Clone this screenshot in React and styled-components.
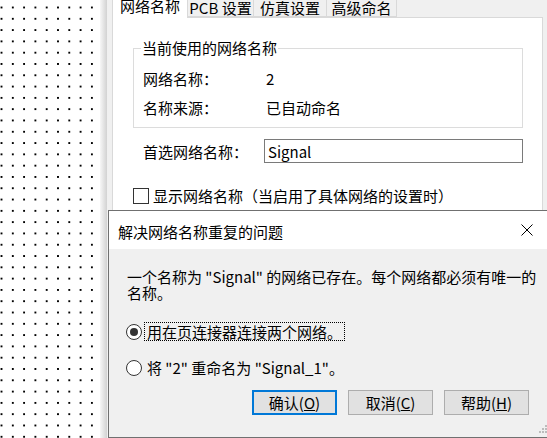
import React from 'react'
import styled, { createGlobalStyle } from 'styled-components'

const GlobalStyle = createGlobalStyle`
  html, body {
    margin: 0;
    padding: 0;
  }
  body {
    width: 547px;
    height: 438px;
    overflow: hidden;
    background: #fff;
    color: #000;
    font-family: "Noto Sans CJK SC", "Noto Sans", sans-serif;
    font-size: 15px;
  }
`

const Screen = styled.div`
  position: relative;
  display: flex;
  width: 547px;
  height: 438px;
  overflow: hidden;
`

const Sheet = styled.div`
  width: 100px;
  flex-shrink: 0;
  background-color: #fff;
  background-image: radial-gradient(circle, #000 0 0.7px, transparent 1px);
  background-size: 11.3px 11.3px;
  background-position: -4.15px 1.85px;
`

const BackWindow = styled.div`
  flex: 1;
  display: flex;
  background: #f0f0f0;
`

const WindowShadow = styled.div`
  width: 7px;
  flex-shrink: 0;
  background: linear-gradient(to right, #f7f7f7, #d2d2d2);
`

const WindowBody = styled.div`
  flex: 1;
  display: flex;
  flex-direction: column;
  padding: 0 4px 0 5px;
`

const TabStrip = styled.div`
  position: relative;
  z-index: 1;
  display: flex;
  align-items: flex-end;
  height: 18px;
  margin-top: -1px;
`

const Tab = styled.div`
  box-sizing: border-box;
  width: ${(p) => p.$w}px;
  height: ${(p) => (p.$active ? 22 : 18)}px;
  margin-left: ${(p) => (p.$first ? 0 : -1)}px;
  margin-bottom: ${(p) => (p.$active ? -1 : 0)}px;
  padding-bottom: ${(p) => (p.$active ? 4 : 0)}px;
  display: flex;
  align-items: center;
  justify-content: center;
  line-height: 18px;
  border: 1px solid #d9d9d9;
  border-bottom: ${(p) => (p.$active ? 'none' : '1px solid #d9d9d9')};
  background: ${(p) => (p.$active ? '#fff' : '#f0f0f0')};
  white-space: nowrap;
`

const TabPanel = styled.div`
  flex: 1;
  display: flex;
  flex-direction: column;
  background: #fff;
  border: 1px solid #d9d9d9;
  padding: 0 19px 0 20px;
`

const GroupBox = styled.fieldset`
  margin: 21px 0 0 0;
  padding: 0 0 10px 9px;
  min-inline-size: 0;
  border: 1px solid #dcdcdc;
`

const GroupTitle = styled.legend`
  margin-left: -2px;
  padding: 0 1px;
  line-height: 18px;
`

const InfoGrid = styled.div`
  display: grid;
  grid-template-columns: 123px 1fr;
  row-gap: 11px;
  margin-top: 13px;
  line-height: 18px;
`

const FieldRow = styled.div`
  display: flex;
  align-items: center;
  margin-top: 11px;
  padding-left: 10px;
`

const FieldLabel = styled.span`
  width: 121px;
  flex-shrink: 0;
`

const TextBox = styled.div`
  flex: 1;
  box-sizing: border-box;
  height: 24px;
  padding-left: 3px;
  display: flex;
  align-items: center;
  border: 1px solid #7a7a7a;
  background: #fff;
`

const CheckRow = styled.label`
  display: flex;
  align-items: center;
  gap: 4px;
  margin-top: 24px;
  line-height: 18px;
  white-space: nowrap;
`

const CheckBox = styled.span`
  box-sizing: border-box;
  width: 16px;
  height: 16px;
  border: 1px solid #333;
  background: #fff;
`

const Dialog = styled.div`
  position: absolute;
  left: 108px;
  top: 210px;
  box-sizing: border-box;
  width: 443px;
  height: 228px;
  display: flex;
  flex-direction: column;
  border: 1px solid #707070;
  background: #f0f0f0;
`

const TitleBar = styled.div`
  height: 38px;
  flex-shrink: 0;
  display: flex;
  align-items: center;
  background: #fff;
`

const Title = styled.div`
  flex: 1;
  padding: 2px 0 0 9px;
  white-space: nowrap;
`

const CloseButton = styled.div`
  width: 46px;
  height: 100%;
  display: flex;
  align-items: center;
  justify-content: center;
`

const DialogBody = styled.div`
  flex: 1;
  display: flex;
  flex-direction: column;
  padding: 0 21px 0 18px;
`

const Message = styled.p`
  margin: 20px 0 0 0;
  line-height: 16px;
  width: 414px;
`

const Options = styled.div`
  display: flex;
  flex-direction: column;
  gap: 17px;
  margin-top: 21px;
`

const Option = styled.div`
  display: flex;
  align-items: center;
  gap: 2px;
  margin-left: -1px;
  white-space: nowrap;
`

const Radio = styled.span`
  box-sizing: border-box;
  width: 16px;
  height: 16px;
  border-radius: 50%;
  border: 1px solid #333;
  background: #fff;
  display: flex;
  align-items: center;
  justify-content: center;

  &::after {
    content: '';
    display: ${(p) => (p.$checked ? 'block' : 'none')};
    width: 8px;
    height: 8px;
    border-radius: 50%;
    background: #333;
  }
`

const OptionText = styled.span`
  padding: 0 2px;
  line-height: 17px;
  border: 1px dotted ${(p) => (p.$focused ? '#000' : 'transparent')};
`

const ButtonRow = styled.div`
  display: flex;
  justify-content: flex-end;
  gap: 11px;
  margin-top: 13px;
`

const Button = styled.button`
  box-sizing: border-box;
  width: 85px;
  height: 25px;
  padding: 0;
  font: inherit;
  color: #000;
  background: #e1e1e1;
  border: ${(p) => (p.$default ? '2px solid #0078d7' : '1px solid #adadad')};
  line-height: 18px;
`

const Grip = styled.svg`
  position: absolute;
  right: 2px;
  bottom: 1px;
`

const App = () => {
  return (
    <>
      <GlobalStyle />
      <Screen>
        <Sheet />
        <BackWindow>
          <WindowShadow />
          <WindowBody>
            <TabStrip>
              <Tab $active $first $w={76}>网络名称</Tab>
              <Tab $w={67}>PCB 设置</Tab>
              <Tab $w={74}>仿真设置</Tab>
              <Tab $w={71}>高级命名</Tab>
            </TabStrip>
            <TabPanel>
              <GroupBox>
                <GroupTitle>当前使用的网络名称</GroupTitle>
                <InfoGrid>
                  <span>网络名称：</span>
                  <span>2</span>
                  <span>名称来源：</span>
                  <span>已自动命名</span>
                </InfoGrid>
              </GroupBox>
              <FieldRow>
                <FieldLabel>首选网络名称：</FieldLabel>
                <TextBox>Signal</TextBox>
              </FieldRow>
              <CheckRow>
                <CheckBox />
                显示网络名称（当启用了具体网络的设置时）
              </CheckRow>
            </TabPanel>
          </WindowBody>
        </BackWindow>

        <Dialog>
          <TitleBar>
            <Title>解决网络名称重复的问题</Title>
            <CloseButton>
              <svg width="12" height="12" viewBox="0 0 12 12">
                <path d="M0.5 0.5 L11.5 11.5 M11.5 0.5 L0.5 11.5" stroke="#000" strokeWidth="1" fill="none" />
              </svg>
            </CloseButton>
          </TitleBar>
          <DialogBody>
            <Message>
              一个名称为 "Signal" 的网络已存在。每个网络都必须有唯一的名称。
            </Message>
            <Options>
              <Option>
                <Radio $checked />
                <OptionText $focused>用在页连接器连接两个网络。</OptionText>
              </Option>
              <Option>
                <Radio />
                <OptionText>将 "2" 重命名为 "Signal_1"。</OptionText>
              </Option>
            </Options>
            <ButtonRow>
              <Button $default>确认(<u>O</u>)</Button>
              <Button>取消(<u>C</u>)</Button>
              <Button>帮助(<u>H</u>)</Button>
            </ButtonRow>
          </DialogBody>
          <Grip width="12" height="12" viewBox="0 0 12 12">
            <rect x="9" y="1" width="2" height="2" fill="#bcbcbc" />
            <rect x="6" y="4" width="2" height="2" fill="#bcbcbc" />
            <rect x="9" y="4" width="2" height="2" fill="#bcbcbc" />
            <rect x="3" y="7" width="2" height="2" fill="#bcbcbc" />
            <rect x="6" y="7" width="2" height="2" fill="#bcbcbc" />
            <rect x="9" y="7" width="2" height="2" fill="#bcbcbc" />
          </Grip>
        </Dialog>
      </Screen>
    </>
  )
}

export default App
